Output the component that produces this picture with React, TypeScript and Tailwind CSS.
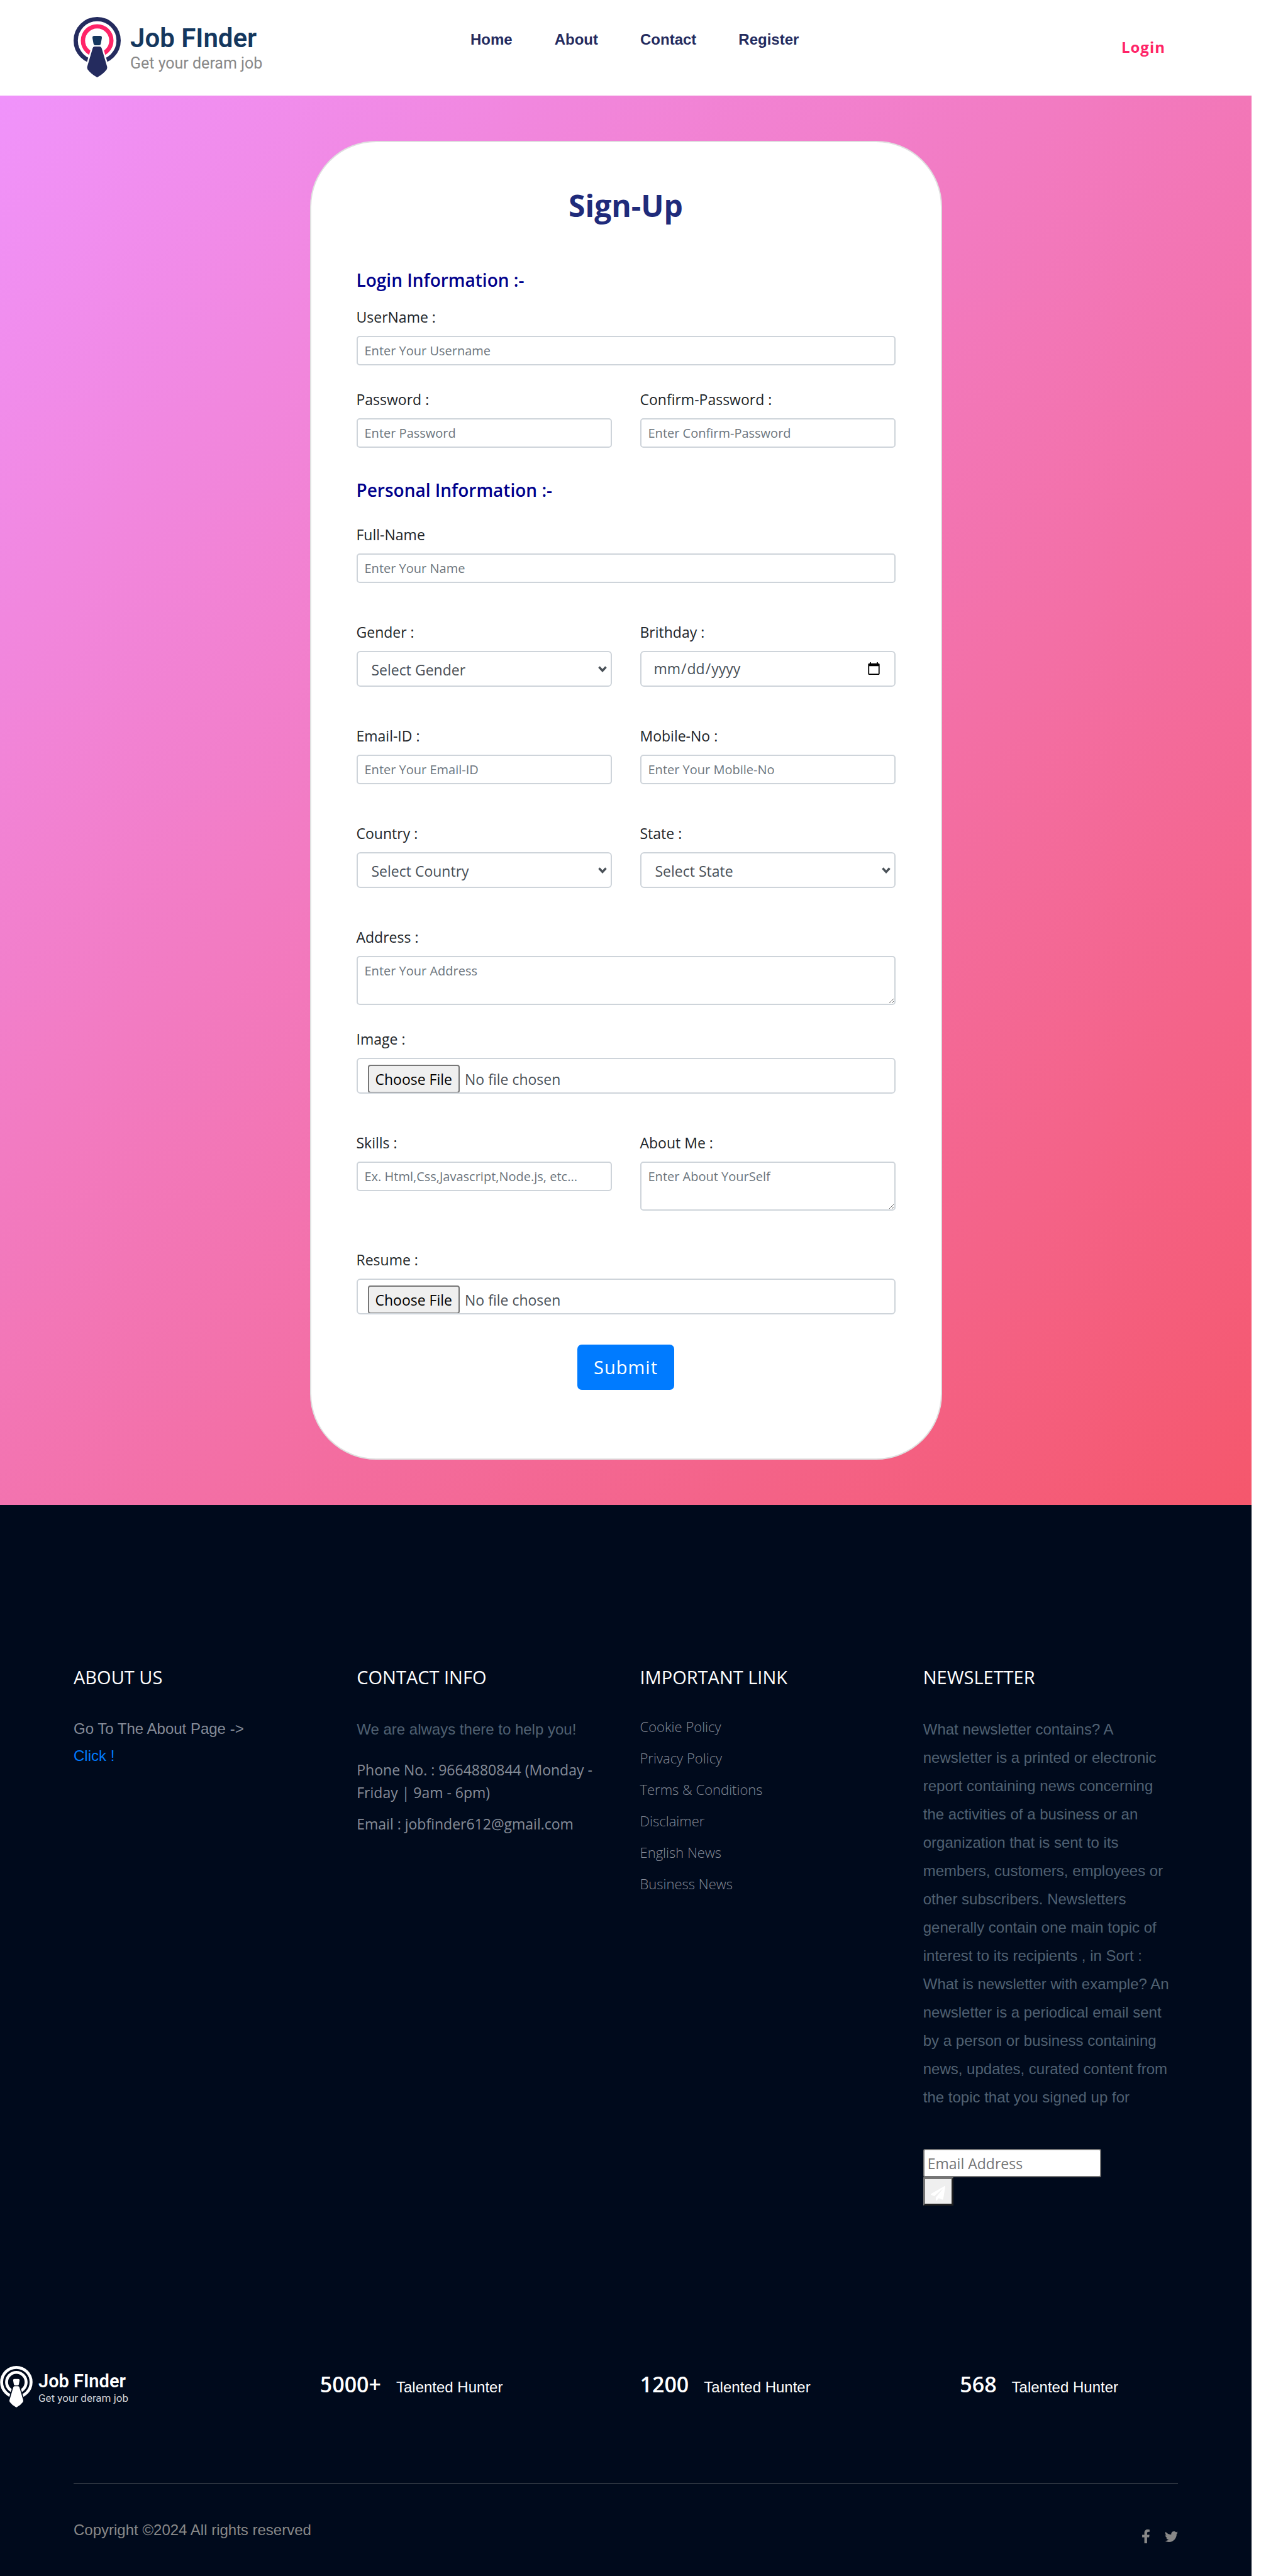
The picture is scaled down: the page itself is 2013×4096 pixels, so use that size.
import React from "react";
import { FaFacebookF, FaPaperPlane, FaTwitter } from "react-icons/fa";

type LogoProps = { light?: boolean };

function LogoMark({ light = false }: LogoProps) {
  const ring = light ? "#ffffff" : "#242b5e";
  const inner = light ? "#ffffff" : "#ff2467";
  const knot = light ? "#ffffff" : "#14375e";
  const gap = light ? "#000a1c" : "#ffffff";
  return (
    <svg
      viewBox="0 0 75 96"
      className={light ? "h-[66px] w-[52px] shrink-0" : "h-24 w-[75px] shrink-0"}
      aria-hidden="true"
    >
      <circle cx="37.5" cy="37.5" r="34.1" fill="none" stroke={ring} strokeWidth="6.8" />
      <circle cx="37.5" cy="37.5" r="22.6" fill="none" stroke={inner} strokeWidth="6.8" />
      <path
        d="M33.5 47h8q2.600 0 3.100 2.600L53.300 79q.600 2.500-.700 4.500L37.500 96 22.400 83.500q-1.300-2-.700-4.500L30.400 49.600Q30.900 47 33.500 47z"
        fill={gap}
        stroke={gap}
        strokeWidth="5"
      />
      <path
        d="M33.500 47h8q2.600 0 3.100 2.600L53.300 79q.600 2.500-.700 4.500Q47 91 37.500 96 28 91 22.400 83.500q-1.300-2-.700-4.500L30.400 49.600Q30.900 47 33.500 47z"
        fill={ring}
      />
      <path
        d="M33 30h9q3.200 0 3 3.200l-1.700 9.300Q42.900 45 40.500 45h-6q-2.400 0-2.800-2.500L30 33.200Q29.800 30 33 30z"
        fill={knot}
      />
    </svg>
  );
}

function Logo({ light = false }: LogoProps) {
  return (
    <a href="#home" className={light ? "flex gap-[9px]" : "flex gap-[15px]"}>
      <LogoMark light={light} />
      <span className="flex flex-col font-['Roboto',sans-serif] whitespace-nowrap">
        <span
          className={
            light
              ? "mt-1.5 text-[29px] leading-9 font-semibold text-white"
              : "mt-2 text-[42px] leading-[52px] font-semibold text-[#14375e]"
          }
        >
          Job FInder
        </span>
        <span
          className={
            light
              ? "text-[17px] leading-[18px] text-[#d0d2d6]"
              : "text-[25px] leading-7 text-[#888888]"
          }
        >
          Get your deram job
        </span>
      </span>
    </a>
  );
}

const navItems = ["Home", "About", "Contact", "Register"];

function Header() {
  return (
    <header className="flex h-[152px] items-start bg-white px-[117px] pt-[27px]">
      <div className="w-[450px]">
        <Logo />
      </div>
      <nav className="mt-[18px] flex flex-1 gap-[67px] pl-[181px] font-['Liberation_Sans',sans-serif] text-2xl leading-9 font-bold text-[#242b5e]">
        {navItems.map((item) => (
          <a key={item} href={`#${item.toLowerCase()}`}>
            {item}
          </a>
        ))}
      </nav>
      <a
        href="#login"
        className="mt-[30px] mr-5 text-2xl leading-9 font-bold tracking-[1px] text-[#ff2467]"
      >
        Login
      </a>
    </header>
  );
}

type FieldProps = { id: string; label: string; children: React.ReactNode };

function Field({ id, label, children }: FieldProps) {
  return (
    <div className="flex flex-col">
      <label htmlFor={id} className="mb-3 self-start text-[23px] leading-9 text-[#212529]">
        {label}
      </label>
      {children}
    </div>
  );
}

type TextProps = { id: string; label: string; placeholder: string; type?: string };

function TextField({ id, label, placeholder, type = "text" }: TextProps) {
  return (
    <Field id={id} label={label}>
      <input
        id={id}
        type={type}
        placeholder={placeholder}
        className="h-[47px] w-full rounded-[5px] border-2 border-[#ced4da] bg-white px-[11px] text-xl text-[#495057] placeholder:text-[#6c757d]"
      />
    </Field>
  );
}

function AreaField({ id, label, placeholder }: TextProps) {
  return (
    <Field id={id} label={label}>
      <textarea
        id={id}
        placeholder={placeholder}
        className="block h-[78px] w-full resize rounded-[5px] border-2 border-[#ced4da] bg-white px-[11px] py-1.5 text-xl leading-8 text-[#495057] placeholder:text-[#6c757d]"
      />
    </Field>
  );
}

function SelectField({ id, label, placeholder }: TextProps) {
  return (
    <Field id={id} label={label}>
      <div className="relative">
        <select
          id={id}
          className="block h-[57px] w-full appearance-none rounded-md border-2 border-[#ced4da] bg-white pt-1 pl-[22px] text-[23px] text-[#495057]"
        >
          <option>{placeholder}</option>
        </select>
        <svg
          viewBox="0 0 14 10"
          className="pointer-events-none absolute top-6 right-2 h-2.5 w-3.5"
          aria-hidden="true"
        >
          <path d="M1.500 1.500 7 7.500l5.500-6" fill="none" stroke="#495057" strokeWidth="3.400" />
        </svg>
      </div>
    </Field>
  );
}

function FileField({ id, label }: { id: string; label: string }) {
  return (
    <Field id={id} label={label}>
      <input
        id={id}
        type="file"
        className="h-[57px] w-full rounded-md border-2 border-[#ced4da] bg-white pt-[9px] pl-4 text-[23px] leading-9 text-[#495057] file:mr-2 file:h-[45px] file:rounded-[4px] file:border-2 file:border-solid file:border-[#767676] file:bg-[#efefef] file:px-2.5 file:text-black"
      />
    </Field>
  );
}

const rowClass = "grid grid-cols-2 gap-[45px]";

function SignUp() {
  return (
    <section className="bg-linear-[135deg,#f093fb_0%,#f5576c_100%] py-[72px]">
      <form
        className="mx-auto max-w-[1005px] rounded-[105px] border-2 border-[#dfdfdf] bg-white px-[72px] pt-[72px] pb-[109px]"
        onSubmit={(event) => event.preventDefault()}
      >
        <h1 className="mb-[70px] text-center text-5xl leading-[58px] font-bold text-[#1f2b7b]">
          Sign-Up
        </h1>

        <h2 className="mb-[22px] text-[28px] leading-[38px] font-semibold text-[#00008b]">
          Login Information :-
        </h2>
        <div className="flex flex-col gap-9">
          <TextField id="username" label="UserName :" placeholder="Enter Your Username" />
          <div className={rowClass}>
            <TextField
              id="password"
              label="Password :"
              placeholder="Enter Password"
              type="password"
            />
            <TextField
              id="confirm"
              label="Confirm-Password :"
              placeholder="Enter Confirm-Password"
              type="password"
            />
          </div>
        </div>

        <h2 className="mt-12 mb-[34px] text-[28px] leading-[38px] font-semibold text-[#00008b]">
          Personal Information :-
        </h2>
        <div className="flex flex-col gap-[60px]">
          <TextField id="fullname" label="Full-Name" placeholder="Enter Your Name" />
          <div className={rowClass}>
            <SelectField id="gender" label="Gender :" placeholder="Select Gender" />
            <Field id="birthday" label="Brithday :">
              <input
                id="birthday"
                type="date"
                className="h-[57px] w-full rounded-md border-2 border-[#ced4da] bg-white px-[19px] text-[23px] text-[#495057]"
              />
            </Field>
          </div>
          <div className={rowClass}>
            <TextField
              id="email"
              label="Email-ID :"
              placeholder="Enter Your Email-ID"
              type="email"
            />
            <TextField
              id="mobile"
              label="Mobile-No :"
              placeholder="Enter Your Mobile-No"
              type="tel"
            />
          </div>
          <div className={rowClass}>
            <SelectField id="country" label="Country :" placeholder="Select Country" />
            <SelectField id="state" label="State :" placeholder="Select State" />
          </div>
          <div className="flex flex-col gap-9">
            <AreaField id="address" label="Address :" placeholder="Enter Your Address" />
            <FileField id="image" label="Image :" />
          </div>
          <div className={rowClass}>
            <TextField
              id="skills"
              label="Skills :"
              placeholder="Ex. Html,Css,Javascript,Node.js, etc..."
            />
            <AreaField id="aboutme" label="About Me :" placeholder="Enter About YourSelf" />
          </div>
          <FileField id="resume" label="Resume :" />
        </div>

        <div className="mt-12 flex justify-center">
          <button
            type="submit"
            className="h-[72px] rounded-[7px] bg-[#007bff] px-[26px] text-[29px] tracking-[1px] text-white"
          >
            Submit
          </button>
        </div>
      </form>
    </section>
  );
}

function FooterColumn({ title, children }: { title: string; children: React.ReactNode }) {
  return (
    <div>
      <h3 className="mb-[41px] font-['Open_Sans',sans-serif] text-[29px] leading-[38px] text-white">
        {title}
      </h3>
      {children}
    </div>
  );
}

const links = [
  "Cookie Policy",
  "Privacy Policy",
  "Terms & Conditions",
  "Disclaimer",
  "English News",
  "Business News",
];

const stats = ["5000+", "1200", "568"];

function Footer() {
  return (
    <footer className="bg-[#000a1c] pt-[255px] pb-[55px] font-['Liberation_Sans',sans-serif] text-2xl">
      <div className="grid grid-cols-4 gap-[45px] px-[117px]">
        <FooterColumn title="ABOUT US">
          <p className="leading-[43px] text-[#868c98]">
            Go To The About Page -&gt;
            <br />
            <a href="#about" className="text-[#007bff]">
              Click !
            </a>
          </p>
        </FooterColumn>

        <FooterColumn title="CONTACT INFO">
          <p className="mb-6 leading-[45px] text-[#506172]">We are always there to help you!</p>
          <ul className="flex flex-col gap-3.5 font-['Open_Sans',sans-serif] text-[23px] leading-9 text-[#868c98]">
            <li>Phone No. : 9664880844 (Monday - Friday | 9am - 6pm)</li>
            <li>Email : jobfinder612@gmail.com</li>
          </ul>
        </FooterColumn>

        <FooterColumn title="IMPORTANT LINK">
          <ul className="flex flex-col gap-3.5 font-['Open_Sans',sans-serif] text-[22px] leading-9 font-light text-[#868c98]">
            {links.map((link) => (
              <li key={link}>
                <a href="#links">{link}</a>
              </li>
            ))}
          </ul>
        </FooterColumn>

        <FooterColumn title="NEWSLETTER">
          <p className="mb-[60px] leading-[45px] text-[#506172]">
            What newsletter contains? A newsletter is a printed or electronic report containing
            news concerning the activities of a business or an organization that is sent to its
            members, customers, employees or other subscribers. Newsletters generally contain one
            main topic of interest to its recipients , in Sort : What is newsletter with example?
            An newsletter is a periodical email sent by a person or business containing news,
            updates, curated content from the topic that you signed up for
          </p>
          <form onSubmit={(event) => event.preventDefault()}>
            <input
              type="email"
              aria-label="Email Address"
              placeholder="Email Address"
              className="block h-[45px] w-[283px] rounded-[3px] border-2 border-[#767676] bg-white px-[5px] font-['Open_Sans',sans-serif] text-[23px] text-black placeholder:text-[#757575]"
            />
            <button
              type="submit"
              aria-label="Subscribe"
              className="flex h-[45px] w-12 items-center justify-center border-[3px] border-t-[#767676] border-r-[#212121] border-b-[#212121] border-l-[#767676] bg-[#efefef] pt-1.5 text-white"
            >
              <FaPaperPlane className="size-[23px]" />
            </button>
          </form>
        </FooterColumn>
      </div>

      <div className="mt-[255px] grid grid-cols-4 gap-[45px] text-white">
        <Logo light />
        {stats.map((value) => (
          <p key={value} className="flex items-baseline gap-6 pt-[7px]">
            <span className="font-['Open_Sans',sans-serif] text-[34px] leading-[44px] font-semibold">
              {value}
            </span>
            <span>Talented Hunter</span>
          </p>
        ))}
      </div>

      <div className="mx-[117px] mt-[120px] flex items-start justify-between border-t-2 border-[#2a323e] pt-[55px] text-[#888888]">
        <p className="leading-9">Copyright ©2024 All rights reserved</p>
        <div className="mt-[17px] flex items-center gap-[19px]">
          <a href="#facebook" aria-label="Facebook">
            <FaFacebookF className="size-[22px]" />
          </a>
          <a href="#twitter" aria-label="Twitter">
            <FaTwitter className="size-[21px]" />
          </a>
        </div>
      </div>
    </footer>
  );
}

export default function App() {
  return (
    <div className="bg-white pr-[23px] font-['Open_Sans',sans-serif]">
      <Header />
      <SignUp />
      <Footer />
    </div>
  );
}
